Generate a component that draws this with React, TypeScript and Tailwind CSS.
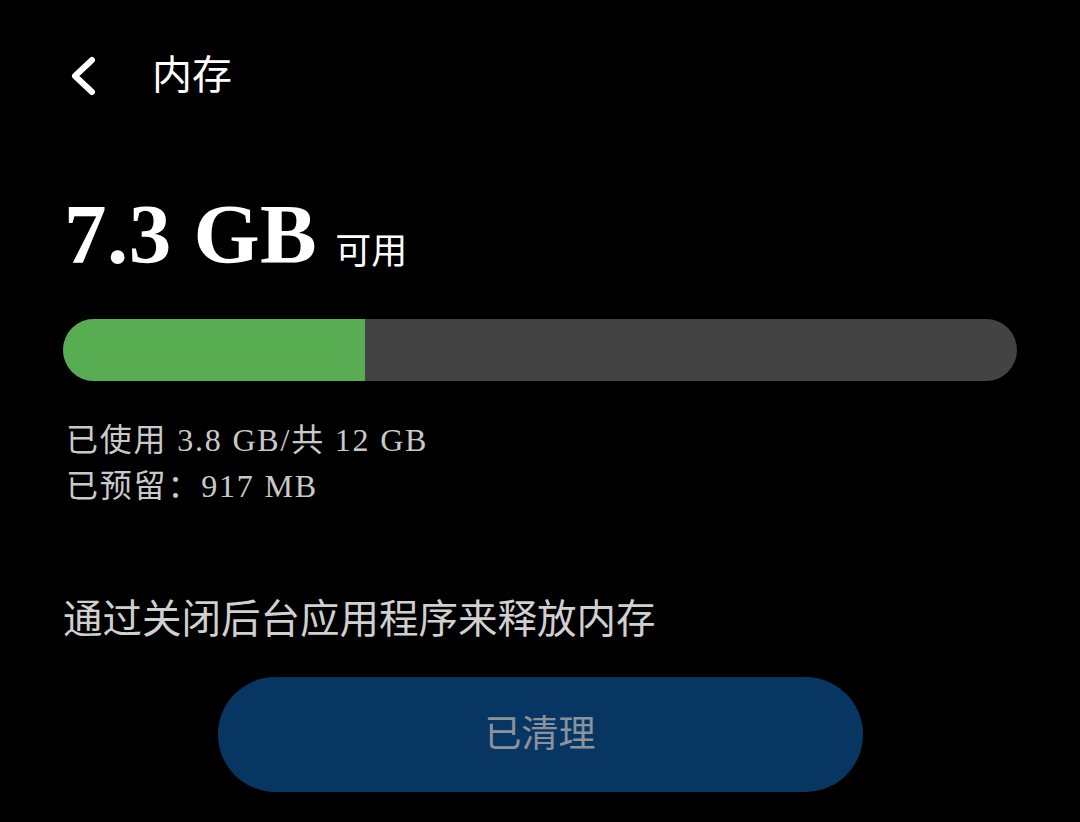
import React from 'react';

const font = { fontFamily: '"Liberation Serif", "Noto Sans CJK SC", serif' };

function BackIcon() {
  return (
    <svg width="34" height="40" viewBox="0 0 34 40" fill="none">
      <path d="M26 4 L9 20 L26 36" stroke="#ffffff" strokeWidth="6" strokeLinecap="round" strokeLinejoin="round" />
    </svg>
  );
}

export default function App() {
  const used = 3.8;
  const total = 12;
  const pct = (used / total) * 100;

  return (
    <div className="w-[1080px] h-[822px] bg-black text-white overflow-hidden" style={font}>
      {/* Header */}
      <div className="flex items-center pl-[66px] pt-[52px]">
        <BackIcon />
        <span className="ml-[52px] text-[40px] leading-[48px] text-white">内存</span>
      </div>

      {/* Available memory */}
      <div className="flex items-end pl-[64px] mt-[94px]">
        <span className="text-[85px] leading-[80px] font-bold tracking-[0.5px]">7.3 GB</span>
        <span className="ml-[18px] text-[36px] leading-[40px] mb-[2px]">可用</span>
      </div>

      {/* Usage bar */}
      <div className="mx-[63px] mt-[45px] h-[62px] rounded-full bg-[#434343] overflow-hidden flex">
        <div className="h-full bg-[#58ad52]" style={{ width: `${pct}%` }} />
      </div>

      {/* Details */}
      <div className="pl-[66px] mt-[36px] text-[32px] leading-[46px] tracking-[1.8px] text-[#c9c9c9]">
        <div>已使用 3.8 GB/共 12 GB</div>
        <div>已预留：917 MB</div>
      </div>

      <div className="pl-[63px] mt-[87px] text-[39.5px] leading-[48px] text-[#d0d0d0]">
        通过关闭后台应用程序来释放内存
      </div>

      {/* Clean button */}
      <div className="flex justify-center mt-[33px]">
        <button className="w-[645px] h-[115px] rounded-full bg-[#083663] text-[37px] text-[#8b929c]">
          已清理
        </button>
      </div>
    </div>
  );
}
